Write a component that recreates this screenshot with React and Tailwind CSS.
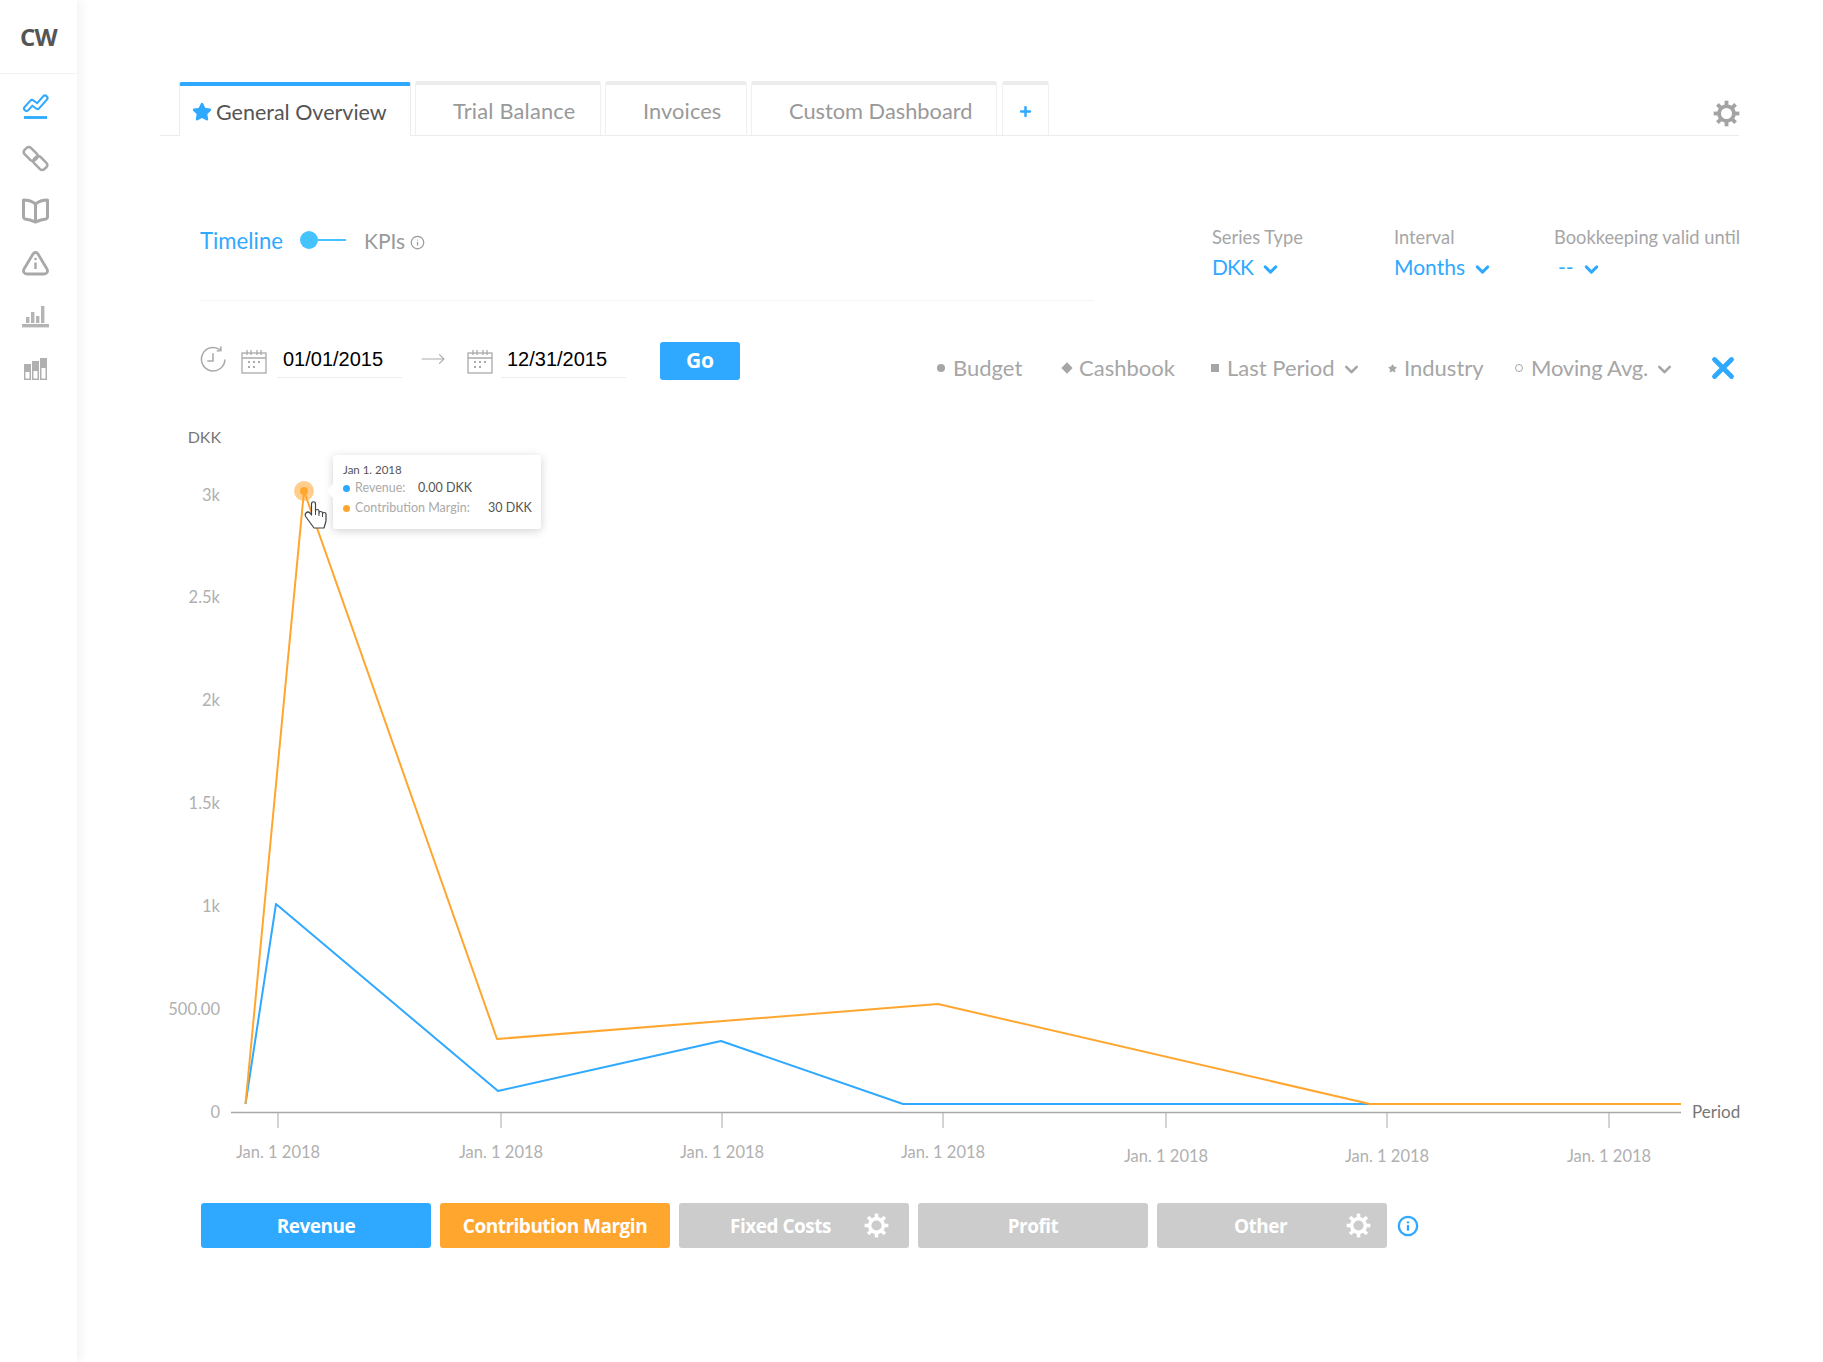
import React from "react";
import { ChevronDown, Star, Plus, Info, X, MoveRight } from "lucide-react";

const blue = "#2fa9ff";
const orange = "#ffa62f";

function Gear({ size = 26, className = "" }) {
  const teeth = [0, 45, 90, 135, 180, 225, 270, 315];
  return (
    <svg width={size} height={size} viewBox="0 0 24 24" className={className}>
      <circle cx="12" cy="12" r="6.6" fill="none" stroke="currentColor" strokeWidth="3.4" />
      {teeth.map((a) => (
        <rect key={a} x="10.3" y="0.6" width="3.4" height="5" fill="currentColor" transform={`rotate(${a} 12 12)`} />
      ))}
    </svg>
  );
}

function CalendarIcon() {
  return (
    <svg width="26" height="26" viewBox="0 0 26 26" fill="none" stroke="#aaa" strokeWidth="1.3">
      <rect x="1" y="4" width="24" height="20" />
      <path d="M1 9h24M6 1v5M10 1v5M16 1v5M20 1v5" />
      <path d="M7 13h2M12 13h2M17 13h2M7 18h2M12 18h2" strokeWidth="2" />
    </svg>
  );
}

function HistoryIcon() {
  return (
    <svg width="27" height="27" viewBox="0 0 26 26" fill="none" stroke="#aaa" strokeWidth="1.500">
      <path d="M24 13A11.300 11.300 0 1 1 19.500 3.700" />
      <path d="M20 .5l.2 4-4 .4" />
      <path d="M12.500 7v7.500H7" />
    </svg>
  );
}

function SideIcon({ children }) {
  return <div className="h-[52.5px] flex items-center justify-center">{children}</div>;
}

function Sidebar() {
  return (
    <aside className="w-[77px] shrink-0 min-h-[1362px] bg-white shadow-[4px_0_10px_rgba(0,0,0,0.05)]">
      <div className="h-[74px] border-b border-[#f3f3f3] flex items-center justify-center text-[24px] font-bold text-[#555] font-['Open_Sans',sans-serif] tracking-[-0.8px]">
        CW
      </div>
      <div className="flex flex-col pr-[6px] pt-[6px]">
        <SideIcon>
          <svg width="27" height="27" viewBox="0 0 27 27" fill="none" strokeLinecap="round" strokeLinejoin="round">
            <path d="M4.500 15.500l5.500-6 5.500 4 7.500-8.500" stroke={blue} strokeWidth="7" />
            <path d="M4.500 15.500l5.500-6 5.500 4 7.500-8.500" stroke="#fff" strokeWidth="2.800" />
            <path d="M2 24.500h23" stroke={blue} strokeWidth="2.800" strokeLinecap="butt" />
          </svg>
        </SideIcon>
        <SideIcon>
          <svg width="27" height="27" viewBox="0 0 27 27" fill="none" stroke="#a8a8a8" strokeWidth="2.600">
            <rect x="1.500" y="4.500" width="14.500" height="9" rx="3" transform="rotate(45 8.750 9)" />
            <rect x="11" y="13.500" width="14.500" height="9" rx="3" transform="rotate(45 18.250 18)" />
          </svg>
        </SideIcon>
        <SideIcon>
          <svg width="27" height="26" viewBox="0 0 27 26" fill="none" stroke="#a8a8a8" strokeWidth="3" strokeLinejoin="round">
            <path d="M13.500 6C10 3 6 2 1.500 2v17c0 1 .5 1.500 1.500 2 4 .5 7 1.500 10.500 3 3.500-1.500 6.500-2.500 10.500-3 1-.5 1.500-1 1.500-2V2C21 2 17 3 13.500 6z" />
            <path d="M13.500 6v18" />
          </svg>
        </SideIcon>
        <SideIcon>
          <svg width="27" height="25" viewBox="0 0 27 25" fill="none" stroke="#a8a8a8" strokeWidth="2.800" strokeLinejoin="round">
            <path d="M11 3c1.300-2 3.700-2 5 0l9 15c1.200 2.500 0 5-3 5H5c-3 0-4.200-2.500-3-5z" />
            <path d="M13.500 11.500v6.500" strokeWidth="2.400" />
            <circle cx="13.500" cy="8" r="1.300" fill="#a8a8a8" stroke="none" />
          </svg>
        </SideIcon>
        <SideIcon>
          <svg width="27" height="23" viewBox="0 0 27 23" fill="#b4b4b4">
            <rect x="0" y="19" width="27" height="3.400" />
            <rect x="4" y="12" width="3.400" height="6" />
            <rect x="9" y="7" width="3.400" height="11" />
            <rect x="14" y="11" width="3.400" height="7" />
            <rect x="19" y="1" width="3.400" height="17" />
          </svg>
        </SideIcon>
        <SideIcon>
          <svg width="24" height="23" viewBox="0 0 24 23">
            <path d="M0 7h7v16H0zM8 4h7v19H8zM16 1h7v22h-7z" fill="#b0b0b0" />
            <path d="M1.500 15h4v6.500h-4zM9.500 14h4v7.500h-4zM17.500 11h4v10.500h-4z" fill="#fff" />
          </svg>
        </SideIcon>
      </div>
    </aside>
  );
}

function Tabs() {
  const tabs = [
    { name: "Trial Balance", cls: "w-[186px] pl-[37px] tracking-[0.200px]" },
    { name: "Invoices", cls: "w-[142px] pl-[37px] tracking-[0.100px]" },
    { name: "Custom Dashboard", cls: "w-[246px] pl-[37px]" },
  ];
  return (
    <div className="flex items-end h-[54px] w-[1579px] pl-[19px] border-b border-[#ececec]">
      <div className="relative -mb-px flex items-center w-[232px] h-[54px] pl-[12px] gap-[4px] bg-white border-t-4 border-x border-t-[#2fa9ff] border-x-[#ececec] rounded-t-[3px] text-[21.500px] text-[#555]">
        <Star size={20} fill={blue} stroke={blue} className="mt-[2px]" />
        <span className="mt-[2px]">General Overview</span>
      </div>
      {tabs.map((t) => (
        <div
          key={t.name}
          className={`flex items-center h-[54px] ml-[4px] border-t-4 border-x border-t-[#ececec] border-x-[#f0f0f0] rounded-t-[3px] text-[21.800px] text-[#999] ${t.cls}`}
        >
          <span className="mt-[2px]">{t.name}</span>
        </div>
      ))}
      <div className="flex items-center justify-center w-[47px] h-[54px] ml-[5px] border-t-4 border-x border-t-[#ececec] border-x-[#f0f0f0] rounded-t-[3px] text-[#2fa9ff]">
        <Plus size={15} strokeWidth={4} className="mt-[2px]" />
      </div>
      <Gear className="ml-auto mb-[8px] -mr-[1px] text-[#a3a3a3]" size={27} />
    </div>
  );
}

function Picker({ label, value, width, cls = "" }) {
  return (
    <div className={width}>
      <div className="text-[18.300px] leading-[24px] text-[#a6a6a6] whitespace-nowrap">{label}</div>
      <div className="flex items-center gap-[7px] mt-[4px] text-[21px] leading-[28px] text-[#2fa9ff]">
        <span className={cls}>{value}</span>
        <ChevronDown size={21} strokeWidth={3.4} className="mt-[4px]" />
      </div>
    </div>
  );
}

function Controls() {
  return (
    <div className="flex pl-[40px]">
      <div className="w-[894px] h-[165px] border-b border-[#f5f5f5] flex items-start pt-[91px] text-[21px] leading-[28px]">
        <span className="text-[#2fa9ff] text-[22.200px]">Timeline</span>
        <div className="flex items-center ml-[17px] mt-[4px]">
          <div className="w-[18px] h-[18px] rounded-full bg-[#45c3ff]" />
          <div className="w-[28px] h-[2px] bg-[#45c3ff]" />
        </div>
        <span className="ml-[18px] text-[#999]">KPIs</span>
        <Info size={15} className="ml-[5px] mt-[8px] text-[#999]" />
      </div>
      <div className="flex ml-[118px] pt-[89px]">
        <Picker label="Series Type" value="DKK" width="w-[182px]" cls="tracking-[-0.900px]" />
        <Picker label="Interval" value="Months" width="w-[160px]" />
        <Picker label="Bookkeeping valid until" value="--" width="w-[188px]" cls="pl-[4px]" />
      </div>
    </div>
  );
}

function DateField({ value }) {
  return (
    <div className="w-[125px] h-[36px] border-b border-[#eee] pl-[6px] text-[20px] leading-[34px] text-black font-['Liberation_Sans',sans-serif]">
      {value}
    </div>
  );
}

function LegendItem({ mark, label, chevron, cls }) {
  return (
    <div className={`flex items-center text-[22px] leading-[28px] text-[#a6a6a6] ${cls}`}>
      <span className="w-[14px] flex justify-center mr-[5px]">{mark}</span>
      {label}
      {chevron && <ChevronDown size={21} strokeWidth={3} className="ml-[6px] mt-[3px]" />}
    </div>
  );
}

function DateRow() {
  return (
    <div className="flex items-start pl-[40px] pt-[41px] h-[79px]">
      <div className="mt-[4px]"><HistoryIcon /></div>
      <div className="ml-[14px] mt-[7px]"><CalendarIcon /></div>
      <div className="ml-[10px]"><DateField value="01/01/2015" /></div>
      <MoveRight size={26} strokeWidth={1} className="ml-[18px] mt-[4px] text-[#aaa]" />
      <div className="ml-[21px] mt-[7px]"><CalendarIcon /></div>
      <div className="ml-[8px]"><DateField value="12/31/2015" /></div>
      <button className="ml-[34px] w-[80px] h-[38px] rounded-[3px] bg-[#2fa9ff] text-white text-[21px] font-bold font-['Open_Sans',sans-serif]">
        Go
      </button>
      <div className="flex items-center mt-[9px] ml-[194px]">
        <LegendItem cls="w-[126px]" label="Budget" mark={<span className="w-[8px] h-[8px] rounded-full bg-[#a6a6a6]" />} />
        <LegendItem cls="w-[148px]" label="Cashbook" mark={<span className="w-[8px] h-[8px] rotate-45 bg-[#a6a6a6]" />} />
        <LegendItem cls="w-[177px]" label="Last Period" chevron mark={<span className="w-[8px] h-[8px] bg-[#a6a6a6]" />} />
        <LegendItem cls="w-[127px]" label="Industry" mark={<Star size={9} fill="#a6a6a6" stroke="#a6a6a6" />} />
        <LegendItem cls="w-[191px] tracking-[-0.200px]" label="Moving Avg." chevron mark={<span className="w-[8px] h-[8px] rounded-full border border-[#a6a6a6]" />} />
        <X size={34} strokeWidth={3.4} className="text-[#2fa9ff] ml-[3px]" />
      </div>
    </div>
  );
}

function Chart() {
  const yLabels = [
    ["3k", 495], ["2.5k", 597], ["2k", 700], ["1.5k", 803], ["1k", 906], ["500.00", 1009], ["0", 1112],
  ];
  const ticks = [[278, 1152], [501, 1152], [722, 1152], [943, 1152], [1166, 1156], [1387, 1156], [1609, 1156]];
  return (
    <div className="relative w-[1600px] h-[770px] mt-[40px]">
      <svg width="1600" height="770" viewBox="160 420 1600 770" className="block font-['Lato',sans-serif]">
        <text x="221" y="443" textAnchor="end" fontSize="16" fill="#777">DKK</text>
        {yLabels.map(([l, y]) => (
          <text key={l} x="220" y={y + 6} textAnchor="end" fontSize="16.500" fill="#b0b0b0">{l}</text>
        ))}
        <path d="M231 1112.500H1681" stroke="#a8a8a8" strokeWidth="1.500" />
        {ticks.map(([x, y]) => (
          <g key={x}>
            <path d={`M${x} 1112V1128`} stroke="#a8a8a8" strokeWidth="1" />
            <text x={x} y={y + 6} textAnchor="middle" fontSize="16.500" fill="#b0b0b0">Jan. 1 2018</text>
          </g>
        ))}
        <text x="1692" y="1118" fontSize="17" fill="#777">Period</text>
        <polyline points="245.500,1104 276,904 498,1091 721,1041 903,1104 1681,1104" fill="none" stroke={blue} strokeWidth="2" strokeLinejoin="round" />
        <polyline points="245.500,1104 304,491 497,1039 938,1004 1370,1104 1681,1104" fill="none" stroke={orange} strokeWidth="2" strokeLinejoin="round" />
        <circle cx="304" cy="491" r="10" fill={orange} opacity="0.55" />
        <circle cx="304" cy="491" r="4" fill={orange} />
        <path d="M306 513c1.500-1.500 3-1 4 0l1.500 2V504c0-3 4-3 4 0v7c0-2 3.500-2 3.500 0v2c0-2 3.500-2 3.500 0v1c0-2 3.500-2 3.500 0v7l-2 7H314l-8-11c-1-1.500-1-3 0-4z" fill="#fff" stroke="#444" strokeWidth="1.200" strokeLinejoin="round" />
        <path d="M315.500 511v4M319 513v3M322.500 514v3" stroke="#444" strokeWidth="1" />
      </svg>
      <div className="absolute left-[173px] top-[35px] w-[208px] h-[74px] bg-white rounded-[3px] shadow-[0_2px_10px_rgba(0,0,0,0.18)] pl-[10px] pt-[7px] font-['Lato',sans-serif] text-[#555]">
        <span className="absolute -left-[5px] top-[31px] w-[10px] h-[10px] rotate-45 bg-white" />
        <div className="text-[11.500px] leading-[15px]">Jan 1. 2018</div>
        <div className="flex items-center text-[12.500px] leading-[20px] mt-[1px] whitespace-nowrap">
          <span className="w-[7px] h-[7px] rounded-full bg-[#2fa9ff] mr-[5px]" />
          <span className="text-[#aaa] w-[63px]">Revenue:</span>
          0.00 DKK
        </div>
        <div className="flex items-center text-[12.500px] leading-[20px] whitespace-nowrap">
          <span className="w-[7px] h-[7px] rounded-full bg-[#ffa62f] mr-[5px]" />
          <span className="text-[#aaa] w-[133px]">Contribution Margin:</span>
          30 DKK
        </div>
      </div>
    </div>
  );
}

function SeriesButtons() {
  const base = "h-[45px] w-[230px] rounded-[3px] flex items-center text-white text-[19px] font-bold font-['Open_Sans',sans-serif] tracking-[-0.500px]";
  return (
    <div className="flex items-center gap-[9px] pl-[41px] mt-[13px]">
      <div className={`${base} bg-[#2fa9ff] justify-center`}><span className="mt-[1px]">Revenue</span></div>
      <div className={`${base} bg-[#ffa62f] justify-center`}><span className="mt-[1px]">Contribution Margin</span></div>
      <div className={`${base} bg-[#cccccc] justify-between pl-[51px] pr-[20px]`}>
        <span className="mt-[1px]">Fixed Costs</span>
        <Gear size={25} />
      </div>
      <div className={`${base} bg-[#cccccc] justify-center`}><span className="mt-[1px]">Profit</span></div>
      <div className={`${base} bg-[#cccccc] justify-between pl-[77px] pr-[16px]`}>
        <span className="mt-[1px]">Other</span>
        <Gear size={25} />
      </div>
      <Info size={22} strokeWidth={2.6} className="text-[#2fa9ff] ml-[1px]" />
    </div>
  );
}

export default function App() {
  return (
    <div className="flex bg-white min-h-[1362px] font-['Lato',sans-serif] overflow-hidden">
      <Sidebar />
      <main className="flex-1 min-w-0 pl-[83px] pt-[82px]">
        <Tabs />
        <Controls />
        <DateRow />
        <Chart />
        <SeriesButtons />
      </main>
    </div>
  );
}
